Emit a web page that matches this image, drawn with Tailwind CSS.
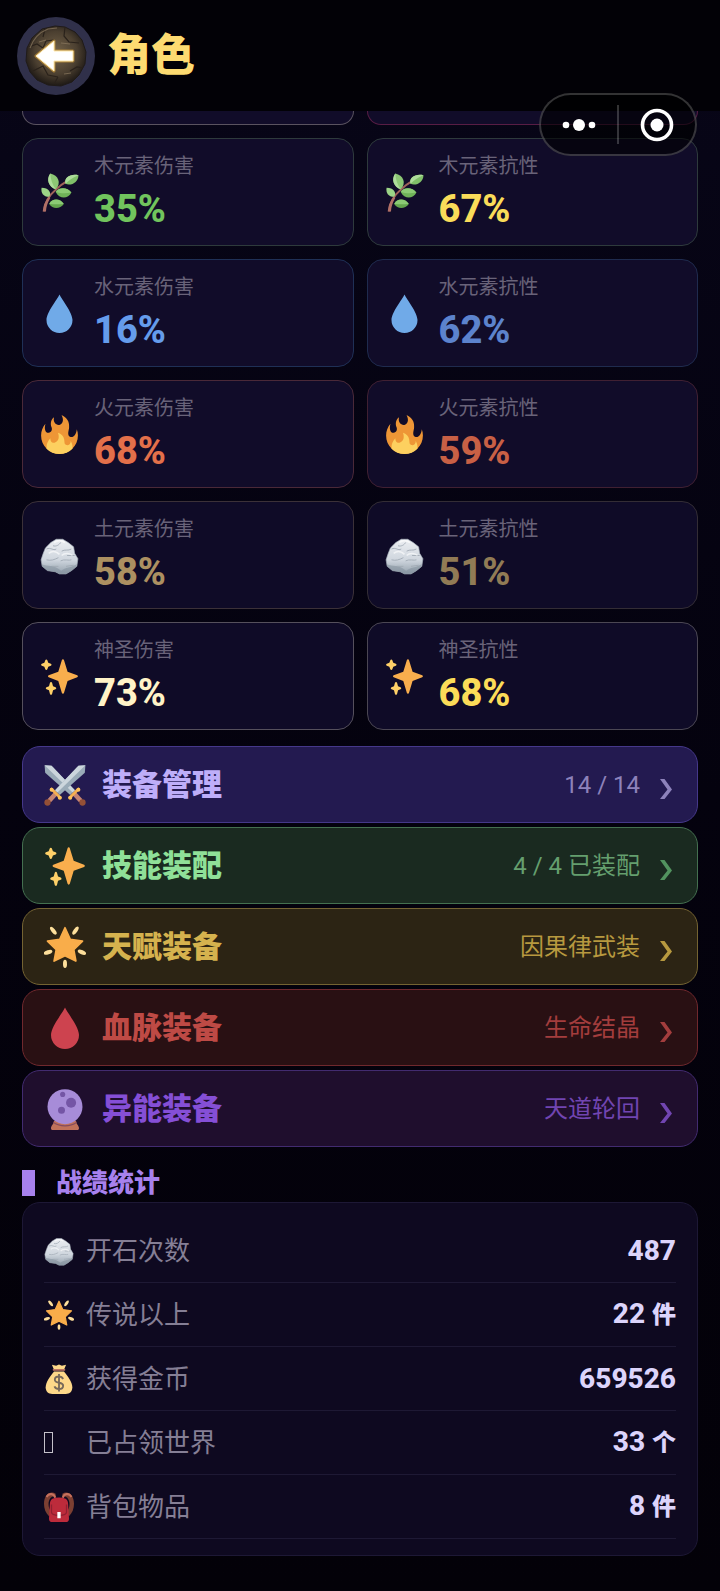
<!DOCTYPE html>
<html lang="zh-CN">
<head>
<meta charset="utf-8">
<meta name="viewport" content="width=device-width, initial-scale=1">
<title>角色</title>
<script src="https://cdn.jsdelivr.net/npm/@tailwindcss/browser@4"></script>
</head>
<body class="bg-[#04020c] font-[Roboto,'Noto_Sans_CJK_SC',sans-serif]">

<!-- Shared icon sprite -->
<svg class="absolute size-0" aria-hidden="true">
  <defs>
    <linearGradient id="rockFill" x1="0" y1="0" x2="0" y2="1"><stop offset="0" stop-color="#eceef2"/><stop offset=".6" stop-color="#cfd6de"/><stop offset="1" stop-color="#93a0ac"/></linearGradient>
    <radialGradient id="stone" cx=".5" cy=".45" r=".55"><stop offset="0" stop-color="#75644a"/><stop offset=".65" stop-color="#4b3f30"/><stop offset="1" stop-color="#1e1915"/></radialGradient>
  </defs>
  <symbol id="herb" viewBox="0 0 36 36">
    <path d="M4 35.500C4 26 9 20 15 15Q19 11 25 7.500" fill="none" stroke="#a0625a" stroke-width="1.800"/>
    <path d="M2.500 35.500Q3 28 8 22l1.500 1Q5.500 30 5.500 35.500Z" fill="#b06f66"/>
    <path d="M14.500 15C8 13 5.500 6 9.500 .5 17 2 20 9.500 14.500 15Z" fill="#8cc774"/><path d="M14.500 15C8 13 5.500 6 9.500 .5Q10 9 14.500 15Z" fill="#aedd9b"/>
    <path d="M23.500 10C22 4 28 .5 35.500 2 35.500 8 29 12.500 23.500 10Z" fill="#80c069"/><path d="M23.500 10C22 4 28 .5 35.500 2Q28 5 23.500 10Z" fill="#aedd9b"/>
    <path d="M14.500 17.500c3.500-5 11-4 14.500.5-3 6-11 6.500-14.500-.5Z" fill="#6fb258"/><path d="M14.500 17.500c3.500-5 11-4 14.500.5-5 1-10 1-14.500-.5Z" fill="#8bca74"/>
    <path d="M8.500 22C3 22 .5 18 1.500 13.500 8 13.500 11 18 8.500 22Z" fill="#9cd487"/>
    <path d="M8.500 28.500c3-5.500 10-5 13.500 0-3.500 5-10.500 5-13.500 0Z" fill="#64a64e"/><path d="M8.500 28.500c3-5.500 10-5 13.500 0-5 .5-9 .5-13.500 0Z" fill="#8bca74"/>
  </symbol>
  <symbol id="drop" viewBox="0 0 36 36"><path d="M18 .5C16 5 6 17 6 24a12 12 0 0 0 24 0C30 17 20 5 18 .5Z" fill="currentColor"/></symbol>
  <symbol id="fire" viewBox="0 0 36 36">
    <path fill="#ee9636" d="M35 19c0-2.062-.367-4.039-1.040-5.868-.46 5.389-3.333 8.157-6.335 6.868-2.812-1.208-.917-5.917-.777-8.164.236-3.809-.012-8.169-6.931-11.794 2.875 5.500.333 8.917-2.333 9.125-2.958.231-5.667-2.542-4.667-7.042-3.238 2.386-3.332 6.402-2.333 9 1.042 2.708-.042 4.958-2.583 5.208-2.840.28-4.418-3.041-2.963-8.333C2.520 10.965 1 14.805 1 19c0 9.389 7.611 17 17 17s17-7.611 17-17z"/>
    <path fill="#fdd05f" d="M28.394 23.999c.148 3.084-2.561 4.293-4.019 3.709-2.106-.843-1.541-2.291-2.083-5.291s-2.625-5.083-5.708-6c2.250 6.333-1.247 8.667-3.080 9.084-1.872.426-3.753-.001-3.968-4.007C7.352 23.668 6 26.676 6 30c0 .368.023.73.055 1.090C9.125 34.124 13.342 36 18 36s8.875-1.876 11.945-4.910c.032-.36.055-.722.055-1.090 0-2.187-.584-4.236-1.606-6.001z"/>
  </symbol>
  <symbol id="rock" viewBox="0 0 36 36">
    <path d="M5 11 10 6l5-3 6 0 5 3 5 4 1 6 3 5-1 7-5 4-5 3-6 0-4-2-7-1-5-4-1-6 2-6Z" fill="url(#rockFill)" stroke="#a9b3bd" stroke-width=".6" stroke-linejoin="round"/>
    <path d="M1.500 26c6 2 11 1 15 4l3 2c4-3 9-3 14.500-6l-1 3-4 3-5 3-6 0-4-2-7-1-5-4Z" fill="#7d8b97" opacity=".5"/>
    <path d="M6 12c4-2 6 2 9 0M12 9c3 1 6-1 7-3M20 14c3-2 6 0 9-2M6 22c4 1 7 0 11-2M19 23c3-2 8 0 10-1M25 18l7 0M11 28l6 0M24 28l7-1" fill="none" stroke="#a0a9b4" stroke-width=".8"/>
    <path d="M8 16c4-3 8-1 10 1M20 18c3-3 8-2 10 0M13 6c3-2 7-2 10 0" fill="none" stroke="#fff" stroke-width="1.500" opacity=".6"/>
  </symbol>
  <symbol id="sparkles" viewBox="0 0 36 36">
    <path fill="#f9ae4d" d="M34.347 16.893l-8.899-3.294-3.323-10.891c-.128-.42-.517-.708-.956-.708-.439 0-.828.288-.956.708l-3.322 10.891-8.900 3.294c-.393.146-.653.519-.653.938 0 .418.26.793.653.938l8.895 3.293 3.324 11.223c.126.424.516.715.959.715.442 0 .833-.291.959-.716l3.324-11.223 8.896-3.293c.391-.144.652-.518.652-.937 0-.418-.261-.792-.653-.938z"/>
    <path fill="#fed068" d="M14.347 27.894l-2.314-.856-.9-3.300c-.118-.436-.513-.738-.964-.738-.451 0-.846.302-.965.737l-.9 3.300-2.313.856c-.393.146-.653.52-.653.938 0 .418.26.793.653.938l2.301.853.907 3.622c.112.444.511.756.97.756.459 0 .858-.312.97-.757l.907-3.622 2.301-.853c.393-.144.653-.519.653-.937 0-.418-.26-.793-.653-.937zM10.009 6.231l-2.364-.875-.876-2.365c-.145-.393-.519-.653-.938-.653-.418 0-.792.26-.938.653l-.875 2.365-2.365.875c-.393.146-.653.52-.653.938 0 .418.26.793.653.938l2.365.875.875 2.365c.146.393.52.653.938.653.418 0 .792-.26.938-.653l.875-2.365 2.365-.875c.393-.146.653-.52.653-.938 0-.418-.26-.792-.653-.938z"/>
  </symbol>
  <symbol id="star" viewBox="0 0 36 36">
    <g fill="#fddf9b"><ellipse cx="8" cy="4" rx="1.700" ry="4" transform="rotate(-38 8 4)"/><ellipse cx="27" cy="4" rx="1.700" ry="4" transform="rotate(35 27 4)"/><ellipse cx="3.500" cy="22.500" rx="1.800" ry="3.800" transform="rotate(72 3.500 22.500)"/><ellipse cx="32.500" cy="22.500" rx="1.800" ry="3.800" transform="rotate(-68 32.500 22.500)"/><ellipse cx="18" cy="32.500" rx="1.700" ry="3.500"/></g>
    <path d="M18 1.500 22.500 11.500 33 13 25.500 20.300 27.300 30 18 25.500 8.700 30 10.500 20.300 3 13 13.500 11.500Z" fill="#f9ad4a" stroke="#f9ad4a" stroke-width="1.500" stroke-linejoin="round"/>
  </symbol>
  <symbol id="swords" viewBox="0 0 36 36">
    <path d="M.5 1 6.500 1.500 26.500 22.500 22.500 26.500 1 7.500Z" fill="#9aabb8"/><path d="M.5 1 6.500 1.500 26.500 22.500 24.500 24.500Z" fill="#ccd6dd"/>
    <path d="m26 25.500 5.500 6" stroke="#c48473" stroke-width="4"/><circle cx="33" cy="33" r="2.700" fill="#945036"/>
    <path d="m22 29 7.500-7.500" stroke="#f5b052" stroke-width="2.400" stroke-linecap="round"/><circle cx="22.500" cy="29" r="1.700" fill="#fdc25d"/><circle cx="29.500" cy="22" r="1.700" fill="#fdc25d"/>
    <path d="M35.500 1 29.500 1.500 9.500 22.500 13.500 26.500 35 7.500Z" fill="#9aabb8"/><path d="M35.500 1 29.500 1.500 9.500 22.500 11.500 24.500Z" fill="#ccd6dd"/>
    <path d="m10 25.500-5.500 6" stroke="#c48473" stroke-width="4"/><circle cx="3" cy="33" r="2.700" fill="#945036"/>
    <path d="m14 29-7.500-7.500" stroke="#f5b052" stroke-width="2.400" stroke-linecap="round"/><circle cx="13.500" cy="29" r="1.700" fill="#fdc25d"/><circle cx="6.500" cy="22" r="1.700" fill="#fdc25d"/>
  </symbol>
  <symbol id="crystal" viewBox="0 0 36 36">
    <path d="M8.500 28h19c0 3 2.500 4 2.500 6.500 0 1-.5 1.500-1.500 1.500h-21C6.500 36 6 35.500 6 34.500 6 32 8.500 31 8.500 28Z" fill="#c0715a"/>
    <path d="M8 29c5 4 15 4 20 0v1c-5 4-15 4-20 0Z" fill="#844b5e"/>
    <circle cx="18" cy="16" r="15" fill="#a78cd8"/>
    <g fill="#7455a5"><circle cx="23.200" cy="12.700" r="4.300"/><circle cx="15" cy="19" r="3"/><circle cx="16" cy="5.500" r="2.200"/></g>
  </symbol>
  <symbol id="bag" viewBox="0 0 36 36">
    <path d="m12 7-2.500-6 5 1L18 .5 21.500 2l5-1L24 7Z" fill="#fdd889"/>
    <path d="M12 9h12c5 6 10 13 10 19 0 5-3 8-8 8H10c-5 0-8-3-8-8C2 22 7 15 12 9Z" fill="#fdd889"/>
    <path d="M11.500 7h13" stroke="#bd7563" stroke-width="2.200" stroke-linecap="round"/>
    <path d="M23 18c-1-2-3-3-5-3-3 0-5 1.500-5 3.800C13 24 23 21 23 26c0 2.500-2 4-5 4-2.500 0-4.500-1-5.500-3.200M18 12v21" fill="none" stroke="#77695a" stroke-width="2.200"/>
  </symbol>
  <symbol id="backpack" viewBox="0 0 36 36">
    <path d="M14 2C7-2 0 4 0 14c0 6 2 11 6 15l3-4C5 19 4 12 8 7c2-2 4-2 6-1ZM22 2c7-4 14 2 14 12 0 6-2 11-6 15l-3-4c4-6 5-13 1-18-2-2-4-2-6-1Z" fill="#7c3f32"/>
    <path d="M13.500 7C12 1.500 6 1 3 6M22.500 7C24 1.500 30 1 33 6" fill="none" stroke="#c5705c" stroke-width="2.500"/>
    <path d="M10 8Q18 5 26 8q3 2 3 7l1 17q0 4-4 4H10q-4 0-4-4l1-17q0-5 3-7Z" fill="#bd2b3b"/>
    <path d="M9 15v9q0 4 9 4t9-4v-9" fill="none" stroke="#8f2031" stroke-width="1.500"/>
    <path d="M16 24h4v7.500h-4z" fill="#fff"/>
  </symbol>
  <symbol id="chevron" viewBox="0 0 20 30"><path d="M4 9h4.500l7.500 10.500L8.500 29H4l7.500-9.500Z" fill="currentColor"/></symbol>
</svg>

<div class="relative bg-linear-to-b from-[#080618] via-[#04020e] to-[#030108]">
  <header class="flex h-[111px] items-center gap-3 bg-[#020106] pl-[17px]">
    <button type="button" aria-label="返回" class="flex size-[78px] items-center justify-center rounded-full bg-[#30304a]">
      <svg class="size-[62px]" viewBox="0 0 62 62" aria-hidden="true">
        <path d="M30 1 40 2 50 7 57 15 61 27 60 39 54 50 47 57 36 61 23 60 12 55 5 47 1 36 2 23 7 13 17 4Z" fill="url(#stone)" stroke="#201b19" stroke-width="1"/>
        <path d="m4 22 8-3 6 4 3-7 8-1M40 2l-1 9 5 6 10 1M8 46l10-5 5 9 10 2M45 46l7-4 6 1M33 52l-4 7M20 4l-2 8" fill="none" stroke="#2a221b" stroke-width="1.200"/>
        <path d="M5 23q5-14 18-19l9-1M14 17l7-2M36 18l9 1M39 49l7-1" fill="none" stroke="#8c7960" stroke-width="1.200" opacity=".7"/>
        <path d="M11 31 29 16v10h19v10H29v10Z" fill="#ffe39a" stroke="#d9a23a" stroke-width="3" stroke-linejoin="round" opacity=".6"/>
        <path d="M11 31 29 16v10h19v10H29v10Z" fill="#fff" stroke="#ffe9ae" stroke-width="1"/>
      </svg>
    </button>
    <h1 class="text-[44px] leading-[64px] font-extrabold text-[#fddb71]">角色</h1>
  </header>

  <main class="px-[22px] pb-[34px]">
    <section aria-label="元素属性" class="grid grid-cols-2 gap-[13px]">
      <div class="h-[14px] rounded-b-2xl border border-t-0 border-[#5a5360] bg-[#110c29]"></div>
      <div class="h-[14px] rounded-b-2xl border border-t-0 border-[#581d45] bg-[#110c29]"></div>

      <article class="flex items-center gap-[15px] rounded-2xl border border-[#2e3a3c] bg-[#110c29] py-[13px] pl-[17px]">
        <svg class="size-[39px]"><use href="#herb"/></svg>
        <div class="flex flex-col gap-[6px]"><h2 class="text-[20px] leading-7 text-[#696379]">木元素伤害</h2><p class="text-[38px] leading-[46px] font-extrabold text-[#71c45d]">35%</p></div>
      </article>
      <article class="flex items-center gap-[15px] rounded-2xl border border-[#2e3a3c] bg-[#110c29] py-[13px] pl-[17px]">
        <svg class="size-[39px]"><use href="#herb"/></svg>
        <div class="flex flex-col gap-[6px]"><h2 class="text-[20px] leading-7 text-[#696379]">木元素抗性</h2><p class="text-[38px] leading-[46px] font-extrabold text-[#fadc59]">67%</p></div>
      </article>

      <article class="flex items-center gap-[15px] rounded-2xl border border-[#1f3056] bg-[#110c29] py-[13px] pl-[17px]">
        <svg class="size-[39px] text-[#70aae8]"><use href="#drop"/></svg>
        <div class="flex flex-col gap-[6px]"><h2 class="text-[20px] leading-7 text-[#696379]">水元素伤害</h2><p class="text-[38px] leading-[46px] font-extrabold text-[#659ceb]">16%</p></div>
      </article>
      <article class="flex items-center gap-[15px] rounded-2xl border border-[#1f2b4e] bg-[#110c29] py-[13px] pl-[17px]">
        <svg class="size-[39px] text-[#70aae8]"><use href="#drop"/></svg>
        <div class="flex flex-col gap-[6px]"><h2 class="text-[20px] leading-7 text-[#696379]">水元素抗性</h2><p class="text-[38px] leading-[46px] font-extrabold text-[#5c83cd]">62%</p></div>
      </article>

      <article class="flex items-center gap-[15px] rounded-2xl border border-[#4a2938] bg-[#110c29] py-[13px] pl-[17px]">
        <svg class="size-[39px]"><use href="#fire"/></svg>
        <div class="flex flex-col gap-[6px]"><h2 class="text-[20px] leading-7 text-[#696379]">火元素伤害</h2><p class="text-[38px] leading-[46px] font-extrabold text-[#e3704a]">68%</p></div>
      </article>
      <article class="flex items-center gap-[15px] rounded-2xl border border-[#402032] bg-[#110c29] py-[13px] pl-[17px]">
        <svg class="size-[39px]"><use href="#fire"/></svg>
        <div class="flex flex-col gap-[6px]"><h2 class="text-[20px] leading-7 text-[#696379]">火元素抗性</h2><p class="text-[38px] leading-[46px] font-extrabold text-[#c86045]">59%</p></div>
      </article>

      <article class="flex items-center gap-[15px] rounded-2xl border border-[#3b3138] bg-[#0f0b27] py-[13px] pl-[17px]">
        <svg class="size-[39px]"><use href="#rock"/></svg>
        <div class="flex flex-col gap-[6px]"><h2 class="text-[20px] leading-7 text-[#696379]">土元素伤害</h2><p class="text-[38px] leading-[46px] font-extrabold text-[#ac9061]">58%</p></div>
      </article>
      <article class="flex items-center gap-[15px] rounded-2xl border border-[#332d35] bg-[#0f0b27] py-[13px] pl-[17px]">
        <svg class="size-[39px]"><use href="#rock"/></svg>
        <div class="flex flex-col gap-[6px]"><h2 class="text-[20px] leading-7 text-[#696379]">土元素抗性</h2><p class="text-[38px] leading-[46px] font-extrabold text-[#917b55]">51%</p></div>
      </article>

      <article class="flex items-center gap-[15px] rounded-2xl border border-[#55505c] bg-[#0f0b27] py-[13px] pl-[17px]">
        <svg class="size-[39px]"><use href="#sparkles"/></svg>
        <div class="flex flex-col gap-[6px]"><h2 class="text-[20px] leading-7 text-[#696379]">神圣伤害</h2><p class="text-[38px] leading-[46px] font-extrabold text-[#fff3c7]">73%</p></div>
      </article>
      <article class="flex items-center gap-[15px] rounded-2xl border border-[#4b4753] bg-[#0f0b27] py-[13px] pl-[17px]">
        <svg class="size-[39px]"><use href="#sparkles"/></svg>
        <div class="flex flex-col gap-[6px]"><h2 class="text-[20px] leading-7 text-[#696379]">神圣抗性</h2><p class="text-[38px] leading-[46px] font-extrabold text-[#fbdc58]">68%</p></div>
      </article>
    </section>

    <nav aria-label="装备" class="mt-4 flex flex-col gap-1">
      <button type="button" class="flex h-[77px] items-center gap-4 rounded-[18px] border border-[#45388a] bg-[#231a50] px-[21px] text-[#8d82bb]">
        <svg class="size-[42px]"><use href="#swords"/></svg><span class="text-[30px] leading-10 font-extrabold text-[#beaef9]">装备管理</span>
        <span class="ml-auto text-[24px] leading-8">14 / 14</span><svg class="h-[30px] w-5"><use href="#chevron"/></svg>
      </button>
      <button type="button" class="flex h-[77px] items-center gap-4 rounded-[18px] border border-[#447050] bg-[#1a2a20] px-[21px] text-[#659f6e]">
        <svg class="size-[42px]"><use href="#sparkles"/></svg><span class="text-[30px] leading-10 font-extrabold text-[#8fe098]">技能装配</span>
        <span class="ml-auto text-[24px] leading-8">4 / 4 已装配</span><svg class="h-[30px] w-5 text-[#52935f]"><use href="#chevron"/></svg>
      </button>
      <button type="button" class="flex h-[77px] items-center gap-4 rounded-[18px] border border-[#746332] bg-[#2c2414] px-[21px] text-[#b7993f]">
        <svg class="size-[42px]"><use href="#star"/></svg><span class="text-[30px] leading-10 font-extrabold text-[#d5b24e]">天赋装备</span>
        <span class="ml-auto text-[24px] leading-8">因果律武装</span><svg class="h-[30px] w-5"><use href="#chevron"/></svg>
      </button>
      <button type="button" class="flex h-[77px] items-center gap-4 rounded-[18px] border border-[#70282d] bg-[#291013] px-[21px] text-[#a33d3d]">
        <svg class="size-[42px] text-[#cd434f]"><use href="#drop"/></svg><span class="text-[30px] leading-10 font-extrabold text-[#be4a45]">血脉装备</span>
        <span class="ml-auto text-[24px] leading-8">生命结晶</span><svg class="h-[30px] w-5"><use href="#chevron"/></svg>
      </button>
      <button type="button" class="flex h-[77px] items-center gap-4 rounded-[18px] border border-[#422b70] bg-[#1f0e2d] px-[21px] text-[#7145b1]">
        <svg class="size-[42px]"><use href="#crystal"/></svg><span class="text-[30px] leading-10 font-extrabold text-[#854fd6]">异能装备</span>
        <span class="ml-auto text-[24px] leading-8">天道轮回</span><svg class="h-[30px] w-5"><use href="#chevron"/></svg>
      </button>
    </nav>

    <section class="mt-[17px]">
      <h2 class="flex items-center gap-[21px] text-[26px] leading-[38px] font-extrabold text-[#a781ed]"><span class="h-[26px] w-[13px] bg-[#a781ed]"></span>战绩统计</h2>
      <dl class="rounded-[18px] border border-[#1d1835] bg-[#0e0920] px-[21px] py-4">
        <div class="flex h-16 items-center gap-3 border-b border-[#1e1934]">
          <svg class="size-[30px]"><use href="#rock"/></svg><dt class="text-[26px] leading-9 text-[#857f95]">开石次数</dt>
          <dd class="ml-auto text-[28px] leading-9 font-extrabold text-[#dcd4fb]">487</dd>
        </div>
        <div class="flex h-16 items-center gap-3 border-b border-[#1e1934]">
          <svg class="size-[30px]"><use href="#star"/></svg><dt class="text-[26px] leading-9 text-[#857f95]">传说以上</dt>
          <dd class="ml-auto text-[28px] leading-9 font-extrabold text-[#dcd4fb]">22 <span class="text-[24px]">件</span></dd>
        </div>
        <div class="flex h-16 items-center gap-3 border-b border-[#1e1934]">
          <svg class="size-[30px]"><use href="#bag"/></svg><dt class="text-[26px] leading-9 text-[#857f95]">获得金币</dt>
          <dd class="ml-auto text-[28px] leading-9 font-extrabold text-[#dcd4fb]">659526</dd>
        </div>
        <div class="flex h-16 items-center gap-3 border-b border-[#1e1934]">
          <span class="w-[30px]"><span class="block h-[21px] w-[9px] border border-[#c4c1ca]"></span></span><dt class="text-[26px] leading-9 text-[#857f95]">已占领世界</dt>
          <dd class="ml-auto text-[28px] leading-9 font-extrabold text-[#dcd4fb]">33 <span class="text-[24px]">个</span></dd>
        </div>
        <div class="flex h-16 items-center gap-3 border-b border-[#1e1934]">
          <svg class="size-[30px]"><use href="#backpack"/></svg><dt class="text-[26px] leading-9 text-[#857f95]">背包物品</dt>
          <dd class="ml-auto text-[28px] leading-9 font-extrabold text-[#dcd4fb]">8 <span class="text-[24px]">件</span></dd>
        </div>
      </dl>
    </section>
  </main>

  <!-- Floating mini-program capsule -->
  <div class="absolute top-[93px] right-[23px] flex h-[63px] w-[158px] items-center rounded-full border-2 border-white/20 bg-black/60">
    <button type="button" aria-label="更多" class="flex h-full flex-1 items-center justify-center">
      <svg class="h-3 w-[34px]" viewBox="0 0 34 12" fill="#fff"><circle cx="4" cy="6" r="3.300"/><circle cx="17" cy="6" r="6"/><circle cx="30" cy="6" r="3.300"/></svg>
    </button>
    <span class="h-[39px] w-[2px] bg-white/20"></span>
    <button type="button" aria-label="关闭" class="flex h-full flex-1 items-center justify-center">
      <svg class="size-[34px]" viewBox="0 0 34 34"><circle cx="17" cy="17" r="14.500" fill="none" stroke="#fff" stroke-width="3.600"/><circle cx="17" cy="17" r="6.500" fill="#fff"/></svg>
    </button>
  </div>
</div>
</body>
</html>
